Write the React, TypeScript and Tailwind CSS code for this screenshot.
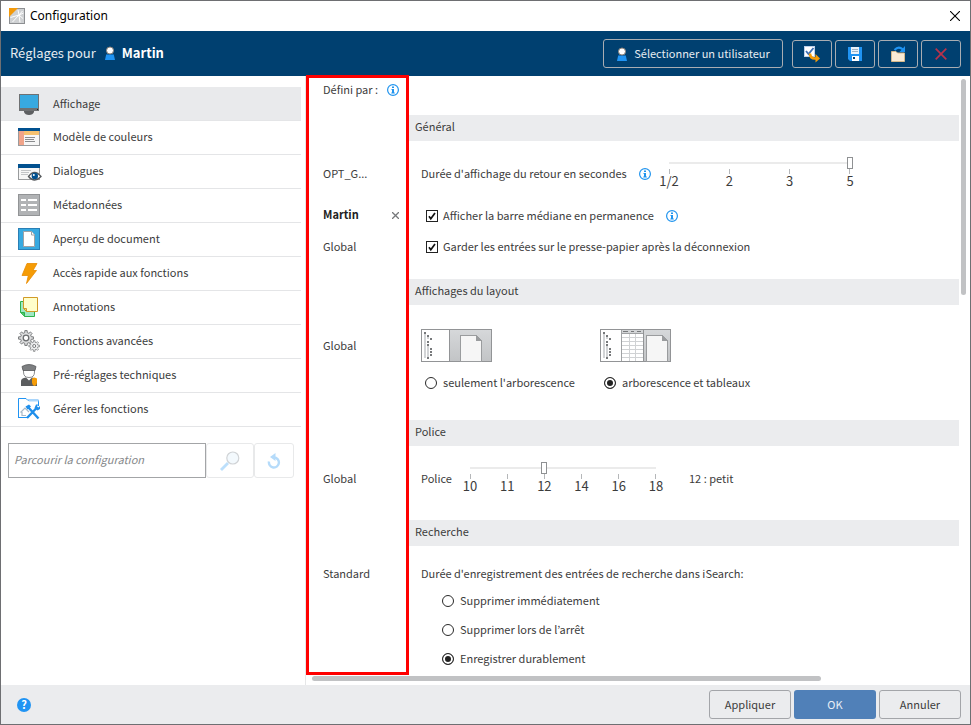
import { useState, type ReactNode } from "react";

function UserIcon() {
  return (
    <svg width="12" height="14" viewBox="0 0 12 14" aria-hidden="true">
      <path d="M1 14l1.200-5.500h7.600L11 14z" fill="#2094f3" />
      <circle cx="6" cy="4.500" r="3.500" fill="#fff" stroke="#8b8178" strokeWidth="1" />
    </svg>
  );
}

function LogoIcon() {
  return (
    <svg width="16" height="16" viewBox="0 0 16 16" aria-hidden="true">
      <rect x=".5" y=".5" width="15" height="15" fill="#cfd1d3" stroke="#8d8f92" />
      <path d="M1.500 9.500L10 7l4.500-2M10 7L9 2M10 7l3.500-4M10 7l4 3.500M10 7l1 7.500M10 7l-6.500 7" stroke="#fff" strokeWidth="1" fill="none" />
      <path d="M0 0h9L0 9z" fill="#f39a0b" />
    </svg>
  );
}

function InfoIcon() {
  return (
    <svg width="12" height="12" viewBox="0 0 12 12" role="img" aria-label="Information" className="shrink-0">
      <circle cx="6" cy="6" r="5.400" fill="#fff" stroke="#2094ee" strokeWidth="1.200" />
      <path d="M5 2.500h2V4H5zM4.500 5H7v3.500h.8v1H4.300v-1H5V6h-.5z" fill="#2094ee" />
    </svg>
  );
}

function MonitorIcon() {
  return (
    <svg width="22" height="22" viewBox="0 0 22 22" aria-hidden="true">
      <rect x="1" y="1" width="20" height="17" fill="#6f7173" />
      <rect x="2" y="2" width="18" height="13" fill="#38a9e0" />
      <path d="M6 18h10v1q-1 3-5 3t-5-3z" fill="#5d5f61" />
      <rect x="19" y="16" width="1" height="1" fill="#222" />
    </svg>
  );
}

function ColorsIcon() {
  return (
    <svg width="22" height="22" viewBox="0 0 22 22" shapeRendering="crispEdges" aria-hidden="true">
      <rect x=".5" y="2.500" width="21" height="17" fill="#f6f6f6" stroke="#999b9d" />
      <rect x="0" y="2" width="22" height="3" fill="#00508f" />
      <rect x="1" y="5" width="5" height="14" fill="#f0a48a" />
      <rect x="6" y="5" width="15" height="4" fill="#f5c170" />
      <path d="M7 11.500h10M7 13.500h9M7 15.500h10" stroke="#8a8c8e" />
    </svg>
  );
}

function DialogIcon() {
  return (
    <svg width="24" height="22" viewBox="0 0 24 22" aria-hidden="true">
      <rect x=".5" y="4.500" width="21" height="15" fill="#f6f6f6" stroke="#999b9d" />
      <rect x="0" y="4" width="22" height="4" fill="#00508f" />
      <path d="M3 10.500h10M3 12.500h8M3 14.500h7" stroke="#c2c4c6" />
      <path d="M10.500 16.500q6-8 12.500 0q-6.500 7-12.500 0z" fill="#fff" stroke="#55585b" strokeWidth="1.300" />
      <circle cx="16.800" cy="16" r="3.200" fill="#00508f" />
      <circle cx="15.800" cy="15" r="1" fill="#fff" />
    </svg>
  );
}

function MetadataIcon() {
  return (
    <svg width="22" height="22" viewBox="0 0 22 22" shapeRendering="crispEdges" aria-hidden="true">
      <rect x=".5" y=".5" width="21" height="21" fill="#b1b3b5" stroke="#929496" />
      <path d="M3 6h5M10 6h9M3 11h5M10 11h9M3 16h5M10 16h9" stroke="#fff" strokeWidth="2" />
    </svg>
  );
}

function PreviewIcon() {
  return (
    <svg width="22" height="22" viewBox="0 0 22 22" aria-hidden="true">
      <rect x=".5" y=".5" width="21" height="21" fill="#38a9e0" stroke="#2a7fb5" />
      <path d="M5.500 3.500h8l3 3.500v11.500h-11z" fill="#fff" stroke="#a0a2a4" />
      <path d="M13.500 3.500V7h3" fill="#fff" stroke="#a0a2a4" />
    </svg>
  );
}

function BoltIcon() {
  return (
    <svg width="22" height="22" viewBox="0 0 22 22" aria-hidden="true">
      <path d="M9 1.500h10l-4 7h3.500L8.500 21.500l1.800-8H4z" fill="#f59c06" stroke="#e88b00" strokeWidth=".8" />
    </svg>
  );
}

function NotesIcon() {
  return (
    <svg width="22" height="22" viewBox="0 0 22 22" aria-hidden="true">
      <path d="M2.500 5.500h14v15H6.500l-4-4z" fill="#9fe8c4" stroke="#2eb24c" />
      <path d="M2.500 16.500h4v4" fill="#4cc76d" stroke="#2eb24c" />
      <path d="M5.500 1.500h14v14h-11l-3-3z" fill="#ffffcb" stroke="#d19a28" />
      <path d="M5.500 12.500h3v3z" fill="#f3d67d" stroke="#d19a28" />
    </svg>
  );
}

function gearPath(cx: number, cy: number, inner: number, outer: number, teeth: number) {
  const points: string[] = [];
  for (let i = 0; i < teeth; i++) {
    for (const [turn, radius] of [[-0.28, inner], [-0.2, outer], [0.2, outer], [0.28, inner]]) {
      const angle = ((i + turn) / teeth) * Math.PI * 2;
      points.push(`${(cx + Math.cos(angle) * radius).toFixed(2)} ${(cy + Math.sin(angle) * radius).toFixed(2)}`);
    }
  }
  return `M${points.join("L")}Z`;
}

function GearsIcon() {
  return (
    <svg width="22" height="22" viewBox="0 0 22 22" fill="none" aria-hidden="true">
      <path d={gearPath(8, 8, 5.5, 7.5, 8)} fill="#dfe0e1" stroke="#77797b" />
      <circle cx="8" cy="8" r="2.800" fill="#fff" stroke="#6b6d6f" strokeWidth="1.300" />
      <path d={gearPath(16.2, 16, 3.8, 5.4, 8)} fill="#eeeff0" stroke="#8b8d8f" strokeWidth=".9" />
      <circle cx="16.200" cy="16" r="1.500" fill="#fff" stroke="#77797b" />
    </svg>
  );
}

function OfficerIcon() {
  return (
    <svg width="22" height="22" viewBox="0 0 22 22" aria-hidden="true">
      <path d="M5.500 5h11v3q0 5.500-5.500 5.500T5.500 8z" fill="#fff" stroke="#8c8e90" />
      <path d="M4 2.500Q11-1.500 18 2.500L17 6.500H5z" fill="#7d7f81" stroke="#555759" strokeWidth=".8" />
      <path d="M3 22v-5q0-3 5-3.500l3 3 3-3q5 .5 5 3.500v5z" fill="#5b5d5f" />
      <path d="M14 14.500l2.500-1 2.500 1v4q0 2.500-2.500 3.500-2.500-1-2.500-3.500z" fill="#f59c06" />
    </svg>
  );
}

function ToolsIcon() {
  return (
    <svg width="22" height="22" viewBox="0 0 22 22" fill="none" aria-hidden="true">
      <path d="M.5 20V.500H8l2 2h10.500V8M.5 19.500H9" stroke="#2094f3" />
      <path d="M9.500 1h11v2.500H11z" fill="#a9d5fb" />
      <path d="M2.500 14.500l4.500-4.500 4 4M4 14v3.500h4" stroke="#a8b9c8" strokeWidth="1.200" />
      <path d="M10 9l10.500 11.500M19.500 9L9 20" stroke="#1f8feb" strokeWidth="2.400" />
      <path d="M7.500 8.500L11 6.500l2 2-3.500 3zM18 6.500l2 0-1 2.500 1.500.500 1.500-1.500V11l-2.500 1.500L16.500 10z" fill="#1f8feb" />
    </svg>
  );
}

const menu: { label: string; icon: ReactNode }[] = [
  { label: "Affichage", icon: <MonitorIcon /> },
  { label: "Modèle de couleurs", icon: <ColorsIcon /> },
  { label: "Dialogues", icon: <DialogIcon /> },
  { label: "Métadonnées", icon: <MetadataIcon /> },
  { label: "Aperçu de document", icon: <PreviewIcon /> },
  { label: "Accès rapide aux fonctions", icon: <BoltIcon /> },
  { label: "Annotations", icon: <NotesIcon /> },
  { label: "Fonctions avancées", icon: <GearsIcon /> },
  { label: "Pré-réglages techniques", icon: <OfficerIcon /> },
  { label: "Gérer les fonctions", icon: <ToolsIcon /> },
];

function ToolButton({ label, children }: { label: string; children: ReactNode }) {
  return (
    <button aria-label={label} className="flex h-7 w-10 items-center justify-center rounded-[3px] border border-[#a9adb2]">
      {children}
    </button>
  );
}

function Header() {
  return (
    <header className="flex h-[45px] items-center justify-between bg-[#004070] px-[9px] text-white">
      <h1 className="flex items-center pb-0.5 text-[13px] leading-4 text-[#e6ecf1]">
        Réglages pour
        <span className="mr-1.5 ml-2">
          <UserIcon />
        </span>
        <strong className="font-bold text-white">Martin</strong>
      </h1>
      <div className="flex items-center gap-[3px]">
        <button className="mr-1.5 flex h-[29px] w-[180px] items-center justify-center gap-1.5 rounded-[3px] border border-[#a9adb2] text-[#e6ecf1]">
          <UserIcon />
          <span className="pb-0.5">Sélectionner un utilisateur</span>
        </button>
        <ToolButton label="Transférer">
          <svg width="18" height="18" viewBox="0 0 18 18" fill="none" aria-hidden="true">
            <rect x="1.500" y="1.500" width="10" height="10" fill="#fff" stroke="#bcd0ea" />
            <path d="M3 6l2.500 3L10.500 3" stroke="#3d6fb5" strokeWidth="1.800" />
            <path d="M7 8.500q0 5 5 5h1" stroke="#f59c06" strokeWidth="2.600" />
            <path d="M12.500 9l4.500 4.500-4.500 4z" fill="#f59c06" />
          </svg>
        </ToolButton>
        <ToolButton label="Enregistrer">
          <svg width="14" height="14" viewBox="0 0 14 14" aria-hidden="true">
            <path d="M0 0h14v14H2l-2-2z" fill="#2094f3" />
            <path d="M3 0h8v7H3z" fill="#e9f2fa" />
            <path d="M4 2.500h6M4 4.500h6" stroke="#9fb3c5" />
            <path d="M4 9h7v5H4z" fill="#fff" />
            <path d="M5 10h2v2H5z" fill="#004070" />
          </svg>
        </ToolButton>
        <ToolButton label="Ouvrir">
          <svg width="16" height="16" viewBox="0 0 16 16" fill="none" aria-hidden="true">
            <path d="M1.500 5.500H6L7.500 7h7v8.500h-13z" fill="#faecd6" stroke="#d6b98a" />
            <path d="M4.500 4q4-4.500 8.500-.5" stroke="#2094f3" strokeWidth="2" />
            <path d="M15 0v6H9.500z" fill="#2094f3" />
          </svg>
        </ToolButton>
        <ToolButton label="Supprimer">
          <svg width="12" height="12" viewBox="0 0 12 12" aria-hidden="true">
            <path d="M.7.700l10.600 10.600M11.300.700L.7 11.300" stroke="#b9324a" strokeWidth="1.700" />
          </svg>
        </ToolButton>
      </div>
    </header>
  );
}

function Sidebar() {
  return (
    <aside className="w-[305px] shrink-0 border-r border-[#e6e7e8] pt-[11px]">
      <nav className="mr-1">
        {menu.map((item, i) => (
          <button
            key={item.label}
            className={
              i === 0
                ? "flex h-[34px] w-full items-center border-b border-[#e4e5e7] bg-[#e9eaec] pl-[17px] text-left"
                : "flex h-[34px] w-full items-center border-b border-[#e4e5e7] pb-0.5 pl-[17px] text-left"
            }
          >
            <span className="w-[35px]">{item.icon}</span>
            <span className="pb-0.5">{item.label}</span>
          </button>
        ))}
      </nav>
      <form className="mt-4 flex pl-[7px]" onSubmit={(e) => e.preventDefault()}>
        <input
          type="text"
          aria-label="Parcourir la configuration"
          placeholder="Parcourir la configuration"
          className="h-[35px] w-[198px] border border-[#a3a5a7] px-[5px] pb-1 italic outline-none placeholder:text-[#858789]"
        />
        <button aria-label="Rechercher" className="flex h-[35px] w-12 items-center justify-center rounded-[3px] border border-[#e8e9ea]">
          <svg width="20" height="20" viewBox="0 0 20 20" fill="none" aria-hidden="true">
            <path d="M1 19l7-7" stroke="#bcdffb" strokeWidth="2.800" />
            <circle cx="12.800" cy="7" r="6" fill="#f3f9fd" stroke="#d0d3d6" strokeWidth="1.200" />
          </svg>
        </button>
        <button aria-label="Réinitialiser" className="flex h-[35px] w-10 items-center justify-center rounded-[3px] border border-[#e8e9ea]">
          <svg width="14" height="16" viewBox="0 0 14 16" fill="none" aria-hidden="true">
            <path d="M2 8.500a5 5 0 1 0 5-4" stroke="#b5dbfa" strokeWidth="2.400" />
            <path d="M8.500 0v8L3 4z" fill="#b5dbfa" />
          </svg>
        </button>
      </form>
    </aside>
  );
}

function Section({ title, children }: { title: string; children: ReactNode }) {
  return (
    <section>
      <h2 className="ml-[103px] flex h-[26px] items-center bg-[#ebecee] pb-1 pl-1.5">{title}</h2>
      {children}
    </section>
  );
}

function Row({ origin, children }: { origin?: ReactNode; children: ReactNode }) {
  return (
    <div className="flex items-center">
      <div className="flex w-[115px] shrink-0 items-center pb-0.5 pl-[17px]">{origin}</div>
      {children}
    </div>
  );
}

function Check({ label }: { label: string }) {
  const [on, setOn] = useState(true);
  return (
    <label className="ml-[5px] flex items-center gap-[5px]">
      <span className="grid">
        <input
          type="checkbox"
          checked={on}
          onChange={(e) => setOn(e.target.checked)}
          className="peer size-3 appearance-none border border-[#222] bg-white [grid-area:1/1]"
        />
        <svg width="12" height="12" viewBox="0 0 12 12" fill="none" aria-hidden="true" className="pointer-events-none invisible [grid-area:1/1] peer-checked:visible">
          <path d="M3 6.200l1.800 2.500L9 3" stroke="#111" strokeWidth="1.700" />
        </svg>
      </span>
      <span className="pb-0.5">{label}</span>
    </label>
  );
}

function Radio({ name, label, checked }: { name: string; label: string; checked?: boolean }) {
  return (
    <label className="flex h-4 items-center gap-1.5">
      <input
        type="radio"
        name={name}
        defaultChecked={checked}
        className="size-3 appearance-none rounded-full border border-[#2a2a2a] bg-white checked:bg-[#222] checked:shadow-[inset_0_0_0_2px_white]"
      />
      <span className="pb-0.5">{label}</span>
    </label>
  );
}

function Slider({ id, marks, start }: { id: string; marks: string[]; start: number }) {
  const [value, setValue] = useState(start);
  return (
    <div className="h-[34px]">
      <div className="grid items-center px-[9px]">
        <span className="mx-[3px] h-0.5 bg-[#ebebeb] [grid-area:1/1]" />
        <input
          id={id}
          type="range"
          min={0}
          max={marks.length - 1}
          value={value}
          onChange={(e) => setValue(Number(e.target.value))}
          className="h-3 w-full min-w-0 appearance-none bg-transparent [grid-area:1/1] [&::-webkit-slider-thumb]:h-3 [&::-webkit-slider-thumb]:w-1.5 [&::-webkit-slider-thumb]:appearance-none [&::-webkit-slider-thumb]:border [&::-webkit-slider-thumb]:border-[#8f9193] [&::-webkit-slider-thumb]:bg-white"
        />
      </div>
      <div className="flex justify-between">
        {marks.map((mark) => (
          <span key={mark} className="flex w-6 flex-col items-center text-[13px] leading-[14px]">
            <span className="h-[5px] w-px bg-[#b5b7b9]" />
            {mark}
          </span>
        ))}
      </div>
    </div>
  );
}

function Tree({ x }: { x: number }) {
  return (
    <g transform={`translate(${x} 0)`} fill="#77797b">
      <path d="M0 5h2v24H0zM3 8h2v2H3zM3 16h2v12H3z" fill="#d2d4d6" />
      <path d="M0 3h2v2H0zM3 6h2v2H3zM6 9h2v2H6zM3 12h2v2H3zM3 15h2v2H3zM6 19h2v2H6zM6 22h2v2H6zM6 25h2v2H6zM3 28h2v2H3z" />
    </g>
  );
}

function LayoutPicture({ table }: { table?: boolean }) {
  const page = table ? 46 : 39;
  return (
    <svg width="71" height="33" viewBox="0 0 71 33" fill="none" shapeRendering="crispEdges" aria-hidden="true">
      <defs>
        <linearGradient id={table ? "paneTable" : "paneTree"} x1="0" y1="0" x2="0" y2="1">
          <stop offset="0" stopColor="#d6d8da" />
          <stop offset="1" stopColor="#c2c4c6" />
        </linearGradient>
      </defs>
      <rect x=".5" y=".5" width="70" height="32" fill="#fff" stroke="#929496" />
      <Tree x={3} />
      {table ? (
        <>
          <rect x="21" y="1" width="22" height="4" fill="#d2d4d6" />
          <path d="M23 2.500h5M31 2.500h3M37 2.500h4" stroke="#77797b" />
          <path d="M21 8.500h22M21 12.500h22M21 16.500h22M21 20.500h22M21 24.500h22M21 28.500h22M29.500 4v28M35.500 4v28" stroke="#d0d2d4" />
          <path d="M21.500 1v31M21 4.500h22" stroke="#a0a2a4" />
          <rect x="43.500" y=".5" width="27" height="32" fill="url(#paneTable)" stroke="#929496" />
        </>
      ) : (
        <rect x="28.500" y=".5" width="42" height="32" fill="url(#paneTree)" stroke="#929496" />
      )}
      <g transform={`translate(${page} 0)`}>
        <path d="M.5 32.500v-26H16l5.500 5v21z" fill="#f6f6f6" stroke="#9a9c9e" />
        <path d="M16 6v6h6z" fill="#9a9c9e" />
      </g>
    </svg>
  );
}

function Settings() {
  return (
    <div className="min-w-0 flex-1">
      <div className="relative pt-1.5">
        {/* Highlight around the "defined by" column */}
        <div className="pointer-events-none absolute -top-px bottom-0 left-0 w-[103px] border-3 border-[#ff0000]" />
        <div className="mb-[17px] flex h-4 items-center gap-[9px] pl-[17px]">
          <span className="pb-0.5">Défini par :</span>
          <InfoIcon />
        </div>
        <Section title="Général">
          <div className="pt-4 pb-[17px]">
            <div className="mb-[9px]">
              <Row origin="OPT_G...">
                <label htmlFor="duration" className="w-[218px] pb-0.5">
                  Durée d'affichage du retour en secondes
                </label>
                <InfoIcon />
                <div className="ml-1.5 w-[205px]">
                  <Slider id="duration" marks={["1/2", "2", "3", "5"]} start={3} />
                </div>
              </Row>
            </div>
            <div className="flex h-8 items-center">
              <Row
                origin={
                  <>
                    <strong className="w-[69px] pb-0.5 font-bold text-[#222]">Martin</strong>
                    <button aria-label="Effacer le réglage">
                      <svg width="7" height="7" viewBox="0 0 7 7" aria-hidden="true">
                        <path d="M0 0l7 7M7 0L0 7" stroke="#77797b" strokeWidth="1.300" />
                      </svg>
                    </button>
                  </>
                }
              >
                <Check label="Afficher la barre médiane en permanence" />
                <span className="ml-3">
                  <InfoIcon />
                </span>
              </Row>
            </div>
            <div className="flex h-[30px] items-center">
              <Row origin="Global">
                <Check label="Garder les entrées sur le presse-papier après la déconnexion" />
              </Row>
            </div>
          </div>
        </Section>
        <Section title="Affichages du layout">
          <div className="pt-6 pb-[29px]">
            <Row origin="Global">
              <div className="w-[179px]">
                <LayoutPicture />
              </div>
              <LayoutPicture table />
            </Row>
            <div className="mt-[13px] flex pl-[119px]">
              <div className="w-[179px]">
                <Radio name="layout" label="seulement l'arborescence" />
              </div>
              <Radio name="layout" label="arborescence et tableaux" checked />
            </div>
          </div>
        </Section>
        <Section title="Police">
          <div className="pt-4 pb-6">
            <Row origin="Global">
              <label htmlFor="font" className="w-[37px] pb-0.5">
                Police
              </label>
              <div className="w-[210px]">
                <Slider id="font" marks={["10", "11", "12", "14", "16", "18"]} start={2} />
              </div>
              <output htmlFor="font" className="ml-[21px] pb-0.5">
                12 : petit
              </output>
            </Row>
          </div>
        </Section>
        <Section title="Recherche">
          <div className="pt-[19px] pb-2">
            <Row origin="Standard">
              <span className="pb-0.5">Durée d'enregistrement des entrées de recherche dans iSearch:</span>
            </Row>
            <div className="mt-[10px] flex flex-col gap-[13px] pl-[136px]">
              <Radio name="search" label="Supprimer immédiatement" />
              <Radio name="search" label="Supprimer lors de l’arrêt" />
              <Radio name="search" label="Enregistrer durablement" checked />
            </div>
          </div>
        </Section>
      </div>
      <div className="mt-px ml-1.5 h-[5px] w-[78%] rounded-full bg-[#c1c2c4]" />
    </div>
  );
}

export default function App() {
  return (
    <div className="flex min-h-screen flex-col border border-[#6e6f72] bg-white font-['Noto_Sans_CJK_KR','Noto_Sans',sans-serif] text-[11px] leading-4 text-[#3c3c3c]">
      <div className="flex h-[30px] items-center justify-between pr-[10px] pl-2 font-['Noto_Sans','Open_Sans',sans-serif] text-xs text-black">
        <div className="flex items-center gap-[5px]">
          <LogoIcon />
          Configuration
        </div>
        <button aria-label="Fermer">
          <svg width="10" height="10" viewBox="0 0 10 10" aria-hidden="true">
            <path d="M0 0l10 10M10 0L0 10" stroke="#000" strokeWidth="1.100" />
          </svg>
        </button>
      </div>
      <Header />
      <div className="flex flex-1">
        <Sidebar />
        <Settings />
        <div className="w-[11px] shrink-0 pt-[3px] pl-0.5">
          <div className="h-[216px] w-[5px] rounded-full bg-[#c1c2c4]" />
        </div>
      </div>
      <footer className="flex h-[39px] items-center gap-[3px] bg-[#ebecee] pr-[9px] pl-4">
        <button aria-label="Aide" className="mr-auto flex size-3.5 items-center justify-center rounded-full bg-[#2094f3] pb-px font-bold text-white">
          ?
        </button>
        <button className="h-[29px] w-[82px] rounded-[3px] border border-[#a3a5a9] pb-0.5">Appliquer</button>
        <button className="h-[29px] w-[82px] rounded-[3px] bg-[#5080b8] pb-0.5 text-[#e8eef6]">OK</button>
        <button className="h-[29px] w-[82px] rounded-[3px] border border-[#a3a5a9] pb-0.5">Annuler</button>
      </footer>
    </div>
  );
}
